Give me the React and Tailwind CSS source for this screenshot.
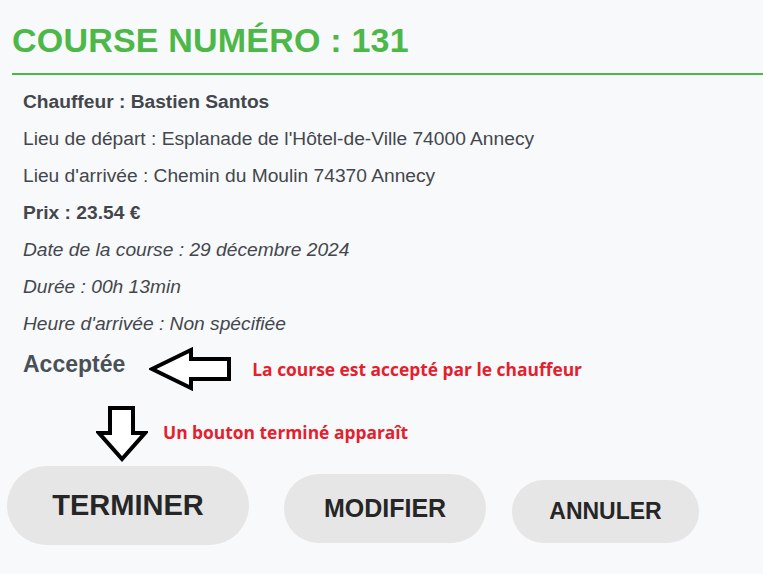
import React from "react";

function LeftArrow() {
  return (
    <svg width="84" height="44" viewBox="0 0 84 44" className="shrink-0">
      <path
        d="M3 22 L42 3 L42 12 L80 12 L80 32 L42 32 L42 41 Z"
        fill="#ffffff"
        stroke="#000"
        strokeWidth="4"
        strokeLinejoin="miter"
      />
    </svg>
  );
}

function DownArrow() {
  return (
    <svg width="52" height="56" viewBox="0 0 52 56" className="shrink-0">
      <path
        d="M14 2 L37 2 L37 27 L49 27 L26 53 L3 27 L14 27 Z"
        fill="#ffffff"
        stroke="#000"
        strokeWidth="4"
        strokeLinejoin="miter"
      />
    </svg>
  );
}

export default function App() {
  const body = "text-[19.2px] leading-[37px] text-[#43474d]";
  return (
    <div
      className="min-h-screen w-full bg-[#f8f9fa] overflow-hidden"
      style={{ fontFamily: '"Liberation Sans", Arial, sans-serif' }}
    >
      <h1 className="pt-[23px] pl-3 text-[34px] leading-none font-bold text-[#4cb848] tracking-[0.2px]">
        COURSE NUMÉRO : 131
      </h1>
      <div className="ml-3 mt-[16px] border-b-2 border-[#4cb848]" />

      <div className="pl-[23px] pt-[8px]">
        <div className={`${body} font-bold`}>Chauffeur : Bastien Santos</div>
        <div className={body}>Lieu de départ : Esplanade de l'Hôtel-de-Ville 74000 Annecy</div>
        <div className={body}>Lieu d'arrivée : Chemin du Moulin 74370 Annecy</div>
        <div className={`${body} font-bold`}>Prix : 23.54 €</div>
        <div className={`${body} italic`}>Date de la course : 29 décembre 2024</div>
        <div className={`${body} italic`}>Durée : 00h 13min</div>
        <div className={`${body} italic`}>Heure d'arrivée : Non spécifiée</div>
      </div>

      <div className="flex items-center pl-[23px] mt-[5px]">
        <div className="text-[23px] font-bold text-[#495057] leading-none -mt-[9px]">Acceptée</div>
        <div className="ml-[24px]">
          <LeftArrow />
        </div>
        <div
          className="ml-[19px] text-[17.4px] font-bold text-[#e5202e] mt-[1px]"
          style={{ fontFamily: '"Open Sans", "Noto Sans", sans-serif' }}
        >
          La course est accepté par le chauffeur
        </div>
      </div>

      <div className="flex items-center pl-[96px] mt-[15px]">
        <DownArrow />
        <div
          className="ml-[15px] -mt-[4px] text-[17.4px] font-bold text-[#e5202e]"
          style={{ fontFamily: '"Open Sans", "Noto Sans", sans-serif' }}
        >
          Un bouton terminé apparaît
        </div>
      </div>

      <div className="flex items-start pl-[7px] mt-[4px]">
        <button className="w-[242px] h-[79px] rounded-full bg-[#e6e6e6] text-[29px] font-bold text-[#262626] flex items-center justify-center">
          TERMINER
        </button>
        <button className="ml-[35px] mt-[8px] w-[202px] h-[69px] rounded-full bg-[#e6e6e6] text-[25px] font-bold text-[#262626] flex items-center justify-center">
          MODIFIER
        </button>
        <button className="ml-[26px] mt-[14px] w-[187px] h-[63px] rounded-full bg-[#e6e6e6] text-[23px] font-bold text-[#262626] flex items-center justify-center">
          ANNULER
        </button>
      </div>
    </div>
  );
}
